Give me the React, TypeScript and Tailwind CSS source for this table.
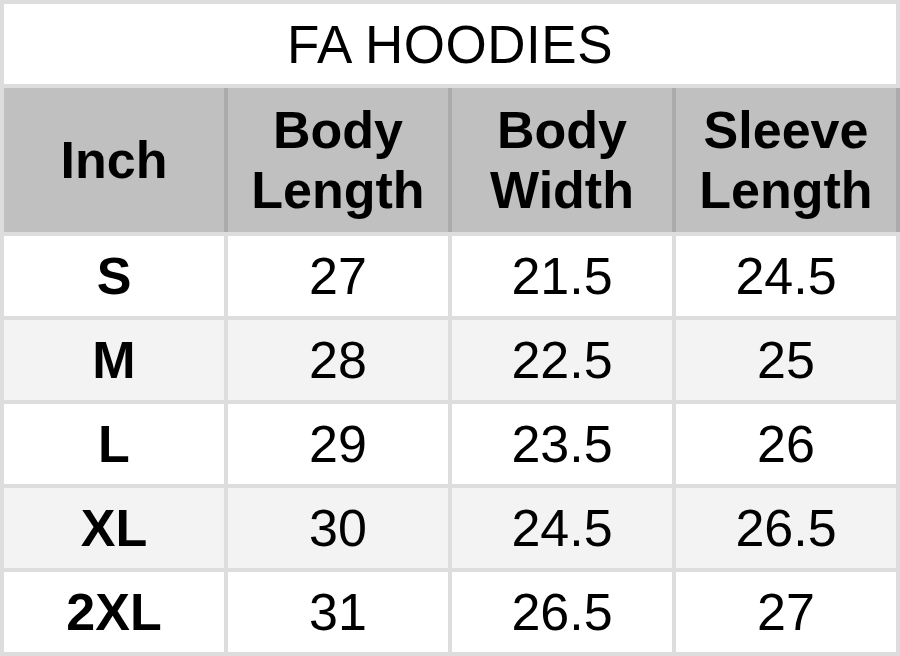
const headers = [["Inch"], ["Body", "Length"], ["Body", "Width"], ["Sleeve", "Length"]];

const rows = [
  ["S", "27", "21.5", "24.5"],
  ["M", "28", "22.5", "25"],
  ["L", "29", "23.5", "26"],
  ["XL", "30", "24.5", "26.5"],
  ["2XL", "31", "26.5", "27"],
];

export default function App() {
  return (
    <div
      className="w-[900px] h-[656px] bg-[#dddddd] p-[4px] flex flex-col gap-[4px] text-black text-[52px]"
      style={{ fontFamily: '"Liberation Sans", Arial, sans-serif' }}
    >
      {/* Title */}
      <div className="h-[80px] bg-white flex items-center justify-center leading-none text-[53px] tracking-[0.5px]">
        FA HOODIES
      </div>

      {/* Header */}
      <div className="h-[144px] mr-[-4px] pr-[4px] bg-[#ababab] grid grid-cols-4 gap-[4px] font-bold">
        {headers.map((h, i) => (
          <div key={i} className="bg-[#c0c0c0] flex flex-col items-center justify-center leading-[60px]">
            {h.map((line) => (
              <span key={line}>{line}</span>
            ))}
          </div>
        ))}
      </div>

      {/* Rows */}
      {rows.map((r, i) => (
        <div key={r[0]} className="h-[80px] grid grid-cols-4 gap-[4px]">
          {r.map((cell, j) => (
            <div
              key={j}
              className={`${i % 2 === 1 ? "bg-[#f3f3f3]" : "bg-white"} flex items-center justify-center leading-none ${
                j === 0 ? "font-bold" : ""
              }`}
            >
              {cell}
            </div>
          ))}
        </div>
      ))}
    </div>
  );
}
